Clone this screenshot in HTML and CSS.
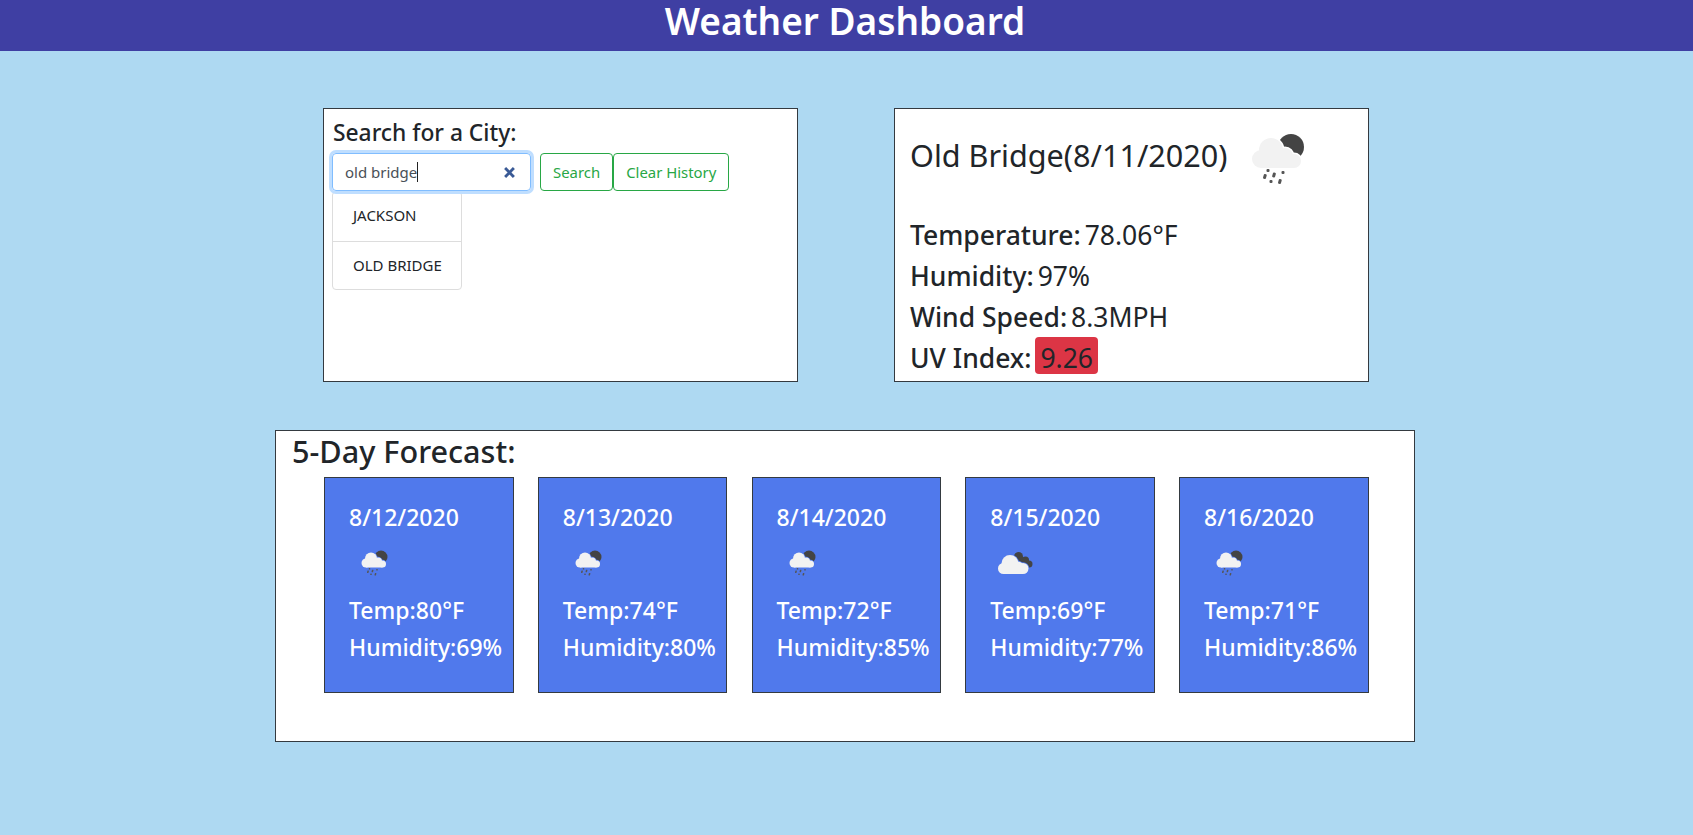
FILE: index.html
```html
<!DOCTYPE html>
<html lang="en">
<head>
    <meta charset="UTF-8">
    <meta name="viewport" content="width=device-width, initial-scale=1.0">
    <title>Weather Dashboard</title>
    <link rel="stylesheet" href="styles.css">
</head>
<body>
    <svg class="icon-defs" width="0" height="0">
        <defs>
            <g id="rainCloud">
                <circle cx="44" cy="41" r="12"/>
                <circle cx="34" cy="50" r="9"/>
                <circle cx="58" cy="47" r="8"/>
                <circle cx="67" cy="52" r="7"/>
                <rect x="34" y="46" width="33" height="13"/>
            </g>
            <g id="frontCloud">
                <circle cx="27" cy="61" r="11"/>
                <circle cx="40" cy="51" r="17"/>
                <circle cx="56" cy="58" r="11"/>
                <circle cx="66" cy="61" r="11"/>
                <rect x="27" y="55" width="39" height="17"/>
            </g>
            <mask id="moonCut">
                <rect width="100" height="100" fill="white"/>
                <use href="#rainCloud" fill="black" stroke="black" stroke-width="3"/>
            </mask>
            <mask id="backCut">
                <rect width="100" height="100" fill="white"/>
                <use href="#frontCloud" fill="black" stroke="black" stroke-width="3"/>
            </mask>
            <symbol id="rain" viewBox="0 0 100 100">
                <circle cx="64" cy="38" r="13" fill="#444" mask="url(#moonCut)"/>
                <use href="#rainCloud" fill="#f2f2f2"/>
                <g fill="#555">
                    <rect x="39.500" y="60" width="3" height="3" rx="1"/>
                    <rect x="36.500" y="65" width="3" height="5" rx="1" transform="rotate(15 38 67)"/>
                    <rect x="45.500" y="63.500" width="3" height="5" rx="1" transform="rotate(15 47 66)"/>
                    <rect x="54.500" y="62" width="3" height="3" rx="1"/>
                    <rect x="42.500" y="71" width="3" height="3" rx="1"/>
                    <rect x="51.500" y="70" width="3" height="5" rx="1" transform="rotate(15 53 72)"/>
                </g>
            </symbol>
            <symbol id="clouds" viewBox="0 0 100 100">
                <g fill="#444" mask="url(#backCut)">
                    <circle cx="57" cy="37" r="9"/>
                    <circle cx="71" cy="44" r="7"/>
                    <circle cx="78" cy="52" r="7"/>
                    <path d="M52 30 L78 45 L78 59 L50 50 Z"/>
                </g>
                <use href="#frontCloud" fill="#f2f2f2"/>
            </symbol>
        </defs>
    </svg>

    <header class="top-bar">
        <h1>Weather Dashboard</h1>
    </header>

    <main class="page">
        <div class="top-row">
            <section class="panel search-panel">
                <h4>Search for a City:</h4>
                <div class="search-row">
                    <div class="search-input" role="searchbox">
                        <span class="typed">old bridge</span>
                        <svg class="clear-x" viewBox="0 0 10 10" width="11" height="11"><path d="M1 1 L9 9 M9 1 L1 9" stroke="#3a5a96" stroke-width="2.600"/></svg>
                    </div>
                    <div class="btn-group">
                        <button type="button" class="btn">Search</button>
                        <button type="button" class="btn">Clear History</button>
                    </div>
                </div>
                <ul class="history">
                    <li>JACKSON</li>
                    <li>OLD BRIDGE</li>
                </ul>
            </section>

            <section class="panel current-panel">
                <div class="current-head">
                    <h2>Old Bridge(8/11/2020)</h2>
                    <svg class="icon-large"><use href="#rain"/></svg>
                </div>
                <p class="stat"><b>Temperature:</b><span>78.06°F</span></p>
                <p class="stat"><b>Humidity:</b><span>97%</span></p>
                <p class="stat"><b>Wind Speed:</b><span>8.3MPH</span></p>
                <p class="stat"><b>UV Index:</b><span class="uv">9.26</span></p>
            </section>
        </div>

        <section class="panel forecast-panel">
            <h2 class="forecast-title">5-Day Forecast:</h2>
            <div class="cards">
                <article class="card">
                    <h5>8/12/2020</h5>
                    <svg class="icon-small"><use href="#rain"/></svg>
                    <p>Temp:80°F</p>
                    <p>Humidity:69%</p>
                </article>
                <article class="card">
                    <h5>8/13/2020</h5>
                    <svg class="icon-small"><use href="#rain"/></svg>
                    <p>Temp:74°F</p>
                    <p>Humidity:80%</p>
                </article>
                <article class="card">
                    <h5>8/14/2020</h5>
                    <svg class="icon-small"><use href="#rain"/></svg>
                    <p>Temp:72°F</p>
                    <p>Humidity:85%</p>
                </article>
                <article class="card">
                    <h5>8/15/2020</h5>
                    <svg class="icon-small"><use href="#clouds"/></svg>
                    <p>Temp:69°F</p>
                    <p>Humidity:77%</p>
                </article>
                <article class="card">
                    <h5>8/16/2020</h5>
                    <svg class="icon-small"><use href="#rain"/></svg>
                    <p>Temp:71°F</p>
                    <p>Humidity:86%</p>
                </article>
            </div>
        </section>
    </main>
</body>
</html>
```

FILE: styles.css
```css
* {
    box-sizing: border-box;
}
body {
    margin: 0;
    height: 835px;
    overflow: hidden;
    background-color: #aed9f2;
    color: #212529;
    font-family: "Noto Sans", "Open Sans", sans-serif;
}
.icon-defs {
    position: absolute;
}
.top-bar {
    height: 51px;
    background-color: #3f3fa3;
    color: white;
    text-align: center;
    padding-right: 3px;
}
.top-bar h1 {
    margin: 0;
    font-size: 37px;
    font-weight: 600;
    line-height: 42px;
}
.page {
    width: 1140px;
    margin-left: 275px;
}
.panel {
    background: white;
    border: 1px solid #343a40;
}
.top-row {
    display: flex;
    margin: 57px 0 0 48px;
    gap: 96px;
}
.search-panel {
    width: 475px;
    height: 274px;
    padding: 9px 9px 9px 8px;
}
.search-panel h4 {
    margin: 0 0 5px;
    padding-left: 1px;
    font-size: 22.800px;
    font-weight: 500;
    line-height: 30px;
}
.search-row {
    display: flex;
    gap: 9px;
}
.search-input {
    width: 199px;
    height: 38px;
    display: flex;
    align-items: center;
    justify-content: space-between;
    padding: 0 15px 0 12px;
    border: 1px solid #80bdff;
    border-radius: 4px;
    box-shadow: 0 0 0 3px #bfdeff;
    color: #495057;
    font-size: 15px;
}
.typed {
    border-right: 1px solid #222;
    line-height: 20px;
}
.btn-group {
    display: flex;
}
.btn {
    height: 38px;
    padding: 0 12px;
    background: white;
    border: 1px solid #28a745;
    border-radius: 4px;
    color: #28a745;
    font-family: inherit;
    font-size: 14.900px;
}
.history {
    list-style: none;
    width: 130px;
    margin: 0;
    padding: 0;
    border: 1px solid #ddd;
    border-radius: 4px;
}
.history li {
    height: 48.500px;
    padding: 0 0 0 20px;
    font-size: 15px;
    line-height: 46px;
    white-space: nowrap;
}
.history li + li {
    border-top: 1px solid #ddd;
}
.current-panel {
    width: 475px;
    height: 274px;
    padding: 0 15px;
}
.current-head {
    display: flex;
    align-items: center;
    height: 100px;
    margin-bottom: 10px;
}
.current-head h2 {
    margin: 0 0 8px;
    font-size: 30.600px;
    font-weight: 400;
}
.icon-large {
    width: 100px;
    height: 100px;
}
.stat {
    margin: 0 0 7.500px;
    font-size: 26.500px;
    line-height: 33.600px;
}
.stat b {
    font-weight: 500;
    margin-right: 4px;
}
.uv {
    display: inline-block;
    margin-top: -6px;
    padding: 6px 5px 0;
    background-color: #dc3545;
    border-radius: 4px;
    line-height: 31px;
}
.forecast-panel {
    width: 1140px;
    height: 312px;
    margin-top: 48px;
    padding-left: 16px;
}
.forecast-title {
    margin: 0;
    font-size: 30.600px;
    font-weight: 500;
    line-height: 40px;
}
.cards {
    display: flex;
    gap: 24.250px;
    margin: 6px 0 0 32px;
}
.card {
    width: 189.500px;
    height: 216px;
    padding: 24px 0 0 24px;
    background-color: #5079ec;
    border: 1px solid #343a40;
    color: white;
    font-size: 23px;
    font-weight: 500;
    white-space: nowrap;
}
.card h5 {
    margin: 0;
    font-size: 23px;
    font-weight: 500;
    line-height: 30px;
}
.icon-small {
    display: block;
    width: 50px;
    height: 50px;
    margin: 6px 0 7px;
}
.card p {
    margin: 0 0 6.500px;
    line-height: 30px;
}
```
